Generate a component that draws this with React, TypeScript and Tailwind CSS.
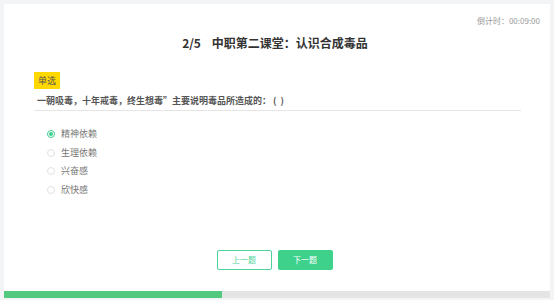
import React from "react";

const options = ["精神依赖", "生理依赖", "兴奋感", "欣快感"];

export default function App() {
  return (
    <div
      className="w-[554px] h-[300px] bg-[#f3f4f6] pt-[4px] pl-[4px] pr-[4px] pb-[2px]"
      style={{ fontFamily: '"Noto Sans CJK SC", "Noto Sans", sans-serif' }}
    >
      <div className="bg-white h-full flex flex-col">
        <div className="flex justify-end pr-[10px] pt-[11px] h-[27px] text-[8px] leading-[12px] text-[#999]">
          倒计时：00:09:00
        </div>
        <div className="mt-[4px] h-[16px] text-center text-[12px] leading-[16px] font-bold text-[#333] pr-[4px]">
          2/5&nbsp;&nbsp;&nbsp;&nbsp;中职第二课堂：认识合成毒品
        </div>
        <div className="pl-[30px] pr-[29px] mt-[14px]">
          <div className="inline-flex items-center justify-center w-[26px] h-[17px] bg-[#ffd800] text-[9px] text-[#555]">
            单选
          </div>
          <div className="mt-[6px] text-[9px] leading-[12px] font-semibold text-[#555] pl-[3px] pb-[3px] border-b border-[#e5e5e5]">
            一朝吸毒，十年戒毒，终生想毒”主要说明毒品所造成的：&nbsp;(&nbsp;&nbsp;)
          </div>
          <div className="mt-[17px] pl-[13px] flex flex-col gap-[6.5px]">
            {options.map((o, i) => (
              <div key={o} className="flex items-center h-[12px] gap-[6px]">
                {i === 0 ? (
                  <span className="w-[8px] h-[8px] rounded-full border border-[#3fcf8e] flex items-center justify-center">
                    <span className="w-[4px] h-[4px] rounded-full bg-[#3fcf8e]" />
                  </span>
                ) : (
                  <span className="w-[8px] h-[8px] rounded-full border border-[#e2e2e2]" />
                )}
                <span className="text-[9px] leading-[12px] text-[#777]">{o}</span>
              </div>
            ))}
          </div>
        </div>
        <div className="flex justify-center gap-[6px] mt-[54px] pr-[5px]">
          <div className="w-[55px] h-[20px] rounded-[2px] border border-[#4fd39a] text-[#4fd39a] text-[8px] flex items-center justify-center">
            上一题
          </div>
          <div className="w-[55px] h-[20px] rounded-[2px] bg-[#3dd18c] text-white text-[8px] flex items-center justify-center">
            下一题
          </div>
        </div>
        <div className="flex-1" />
        <div className="h-[7px] bg-[#e4e4e4] flex">
          <div className="h-full bg-[#52c97e]" style={{ width: "40%" }} />
        </div>
      </div>
    </div>
  );
}
